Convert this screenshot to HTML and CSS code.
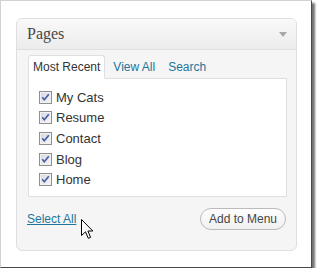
FILE: index.html
```html
<!DOCTYPE html>
<html lang="en">
<head>
  <meta charset="UTF-8" />
  <title>Pages</title>
  <link rel="stylesheet" href="styles.css">
</head>
<body>
  <div class="shot">
    <div class="widget">
      <div class="widget-head">
        <h3>Pages</h3>
        <span class="toggle"></span>
      </div>
      <div class="widget-body">
        <ul class="tabs">
          <li class="tab active">Most Recent</li>
          <li class="tab"><a href="#">View All</a></li>
          <li class="tab"><a href="#">Search</a></li>
        </ul>
        <div class="panel">
          <ul class="checklist">
            <li><svg class="check" width="13" height="13" viewBox="0 0 13 13"><defs><linearGradient id="cb" x1="0" y1="0" x2="1" y2="1"><stop offset="0" stop-color="#d3d7e2"/><stop offset="1" stop-color="#f7f7f7"/></linearGradient></defs><rect x="0.5" y="0.5" width="12" height="12" fill="url(#cb)" stroke="#8e8f8f"/><rect x="1.5" y="1.5" width="10" height="10" fill="none" stroke="#f2f2f2"/><path d="M3.2 6.3 L5.3 8.7 L9.8 3.3" fill="none" stroke="#4b5ea3" stroke-width="1.7"/></svg>My Cats</li>
            <li><svg class="check" width="13" height="13" viewBox="0 0 13 13"><rect x="0.5" y="0.5" width="12" height="12" fill="url(#cb)" stroke="#8e8f8f"/><rect x="1.5" y="1.5" width="10" height="10" fill="none" stroke="#f2f2f2"/><path d="M3.2 6.3 L5.3 8.7 L9.8 3.3" fill="none" stroke="#4b5ea3" stroke-width="1.7"/></svg>Resume</li>
            <li><svg class="check" width="13" height="13" viewBox="0 0 13 13"><rect x="0.5" y="0.5" width="12" height="12" fill="url(#cb)" stroke="#8e8f8f"/><rect x="1.5" y="1.5" width="10" height="10" fill="none" stroke="#f2f2f2"/><path d="M3.2 6.3 L5.3 8.7 L9.8 3.3" fill="none" stroke="#4b5ea3" stroke-width="1.7"/></svg>Contact</li>
            <li><svg class="check" width="13" height="13" viewBox="0 0 13 13"><rect x="0.5" y="0.5" width="12" height="12" fill="url(#cb)" stroke="#8e8f8f"/><rect x="1.5" y="1.5" width="10" height="10" fill="none" stroke="#f2f2f2"/><path d="M3.2 6.3 L5.3 8.7 L9.8 3.3" fill="none" stroke="#4b5ea3" stroke-width="1.7"/></svg>Blog</li>
            <li><svg class="check" width="13" height="13" viewBox="0 0 13 13"><rect x="0.5" y="0.5" width="12" height="12" fill="url(#cb)" stroke="#8e8f8f"/><rect x="1.5" y="1.5" width="10" height="10" fill="none" stroke="#f2f2f2"/><path d="M3.2 6.3 L5.3 8.7 L9.8 3.3" fill="none" stroke="#4b5ea3" stroke-width="1.7"/></svg>Home</li>
          </ul>
        </div>
        <div class="actions">
          <a href="#" class="select-all">Select All</a>
          <button class="btn-add">Add to Menu</button>
        </div>
      </div>
    </div>
    <svg class="cursor" width="13" height="21" viewBox="0 0 13 21">
      <path d="M0.5 0.5 L0.5 16.5 L4.5 12.8 L7.3 19.3 L9.6 18.3 L6.9 12 L11.8 12 Z" fill="#fff" stroke="#000" stroke-width="1" stroke-linejoin="miter"/>
    </svg>
  </div>
</body>
</html>
```

FILE: styles.css
```css
body {
  margin: 0;
  background-color: #fff;
}

.shot {
  position: relative;
  width: 312px;
  height: 268px;
  box-sizing: border-box;
  background-color: #fff;
  border-top: 1px solid #d2d2d2;
  border-left: 1px solid #d2d2d2;
  border-right: 1px solid #4a4a4a;
  border-bottom: 1px solid #4a4a4a;
  box-shadow: 3px 3px 2px rgba(0, 0, 0, 0.55);
  padding: 17px 0 0 15px;
  font-family: "Liberation Sans", Arial, sans-serif;
}

.widget {
  width: 281px;
  box-sizing: border-box;
  border: 1px solid #dfdfdf;
  border-radius: 6px;
  overflow: hidden;
  background-color: #f5f5f5;
}

.widget-head {
  display: flex;
  justify-content: space-between;
  align-items: center;
  height: 30px;
  padding: 0 9px 0 10px;
  background: linear-gradient(to bottom, #f9f9f9, #ececec);
  border-bottom: 1px solid #dfdfdf;
}

.widget-head h3 {
  margin: 0;
  font-family: "Liberation Serif", "Times New Roman", serif;
  font-weight: normal;
  font-size: 16px;
  line-height: 30px;
  color: #464646;
}

.toggle {
  width: 0;
  height: 0;
  border-left: 4px solid transparent;
  border-right: 4px solid transparent;
  border-top: 5px solid #a8a8a8;
}

.widget-body {
  padding: 5px 9px 20px 11px;
}

.tabs {
  display: flex;
  gap: 3px;
  margin: 0;
  padding: 0;
  list-style: none;
  font-size: 12px;
  position: relative;
  z-index: 1;
}

.tab {
  padding: 0 4px;
  line-height: 22px;
  border: 1px solid transparent;
  border-radius: 3px 3px 0 0;
  margin-bottom: -1px;
}

.tab a {
  color: #21759b;
  text-decoration: none;
}

.tab.active {
  color: #333;
  background-color: #fff;
  border-color: #dfdfdf;
  border-bottom-color: #fff;
}

.panel {
  background-color: #fff;
  border: 1px solid #dfdfdf;
  padding: 8px 0 6px 10px;
}

.checklist {
  margin: 0;
  padding: 0;
  list-style: none;
}

.checklist li {
  display: flex;
  align-items: center;
  height: 20.6px;
  font-size: 13px;
  color: #333;
}

.check {
  margin-right: 4px;
  flex-shrink: 0;
}

.actions {
  display: flex;
  justify-content: space-between;
  align-items: center;
  margin: 11px 1px 0 -1px;
  height: 22px;
}

.select-all {
  font-size: 12px;
  color: #21759b;
  text-decoration: underline;
}

.btn-add {
  font-family: "Liberation Sans", Arial, sans-serif;
  font-size: 12px;
  color: #464646;
  height: 22px;
  padding: 0 8px;
  border: 1px solid #bbb;
  border-radius: 11px;
  background: linear-gradient(to bottom, #fefefe, #f0f0f0);
}

.cursor {
  position: absolute;
  left: 80px;
  top: 218px;
}
```
